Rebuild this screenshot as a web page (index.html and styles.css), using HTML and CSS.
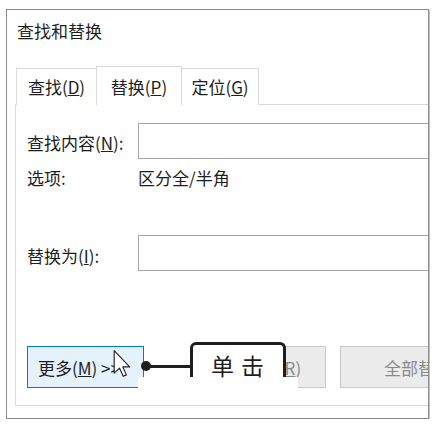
FILE: index.html
```html
<!DOCTYPE html>
<html lang="zh-CN">
<head>
<meta charset="utf-8">
<title>查找和替换</title>
<link rel="stylesheet" href="styles.css">
</head>
<body>
<div class="dialog">
  <div class="title">查找和替换</div>
  <div class="tabs">
    <div class="tab tab-first">查找(<u>D</u>)</div>
    <div class="tab tab-active">替换(<u>P</u>)</div>
    <div class="tab tab-last">定位(<u>G</u>)</div>
  </div>
  <div class="panel">
    <div class="row">
      <div class="label">查找内容(<u>N</u>):</div>
      <div class="input"></div>
    </div>
    <div class="row row-opt">
      <div class="label">选项:</div>
      <div class="opt-value">区分全/半角</div>
    </div>
    <div class="row row-replace">
      <div class="label label-low">替换为(<u>I</u>):</div>
      <div class="input"></div>
    </div>
    <div class="buttons">
      <div class="btn btn-more">更多(<u>M</u>) &gt;&gt;</div>
      <div class="btn btn-off btn-replace">替换(<u>R</u>)</div>
      <div class="btn btn-off btn-all">全部替换(<u>A</u>)</div>
    </div>
  </div>
</div>

<svg class="cursor" width="18" height="27" viewBox="0 0 12 19" aria-hidden="true">
  <path d="M0.5 0.5 L0.5 16.3 L4.3 12.8 L6.9 18.5 L9.1 17.5 L6.6 11.9 L11.4 11.9 Z" fill="#fff" stroke="#222" stroke-width="0.8" stroke-linejoin="round"/>
</svg>

<div class="patch"></div>
<div class="dot"></div>
<div class="leader"></div>
<div class="callout">单击</div>
</body>
</html>
```
FILE: styles.css
```css
html, body {
  margin: 0;
  padding: 0;
  background: #fff;
}

body {
  font-family: "Noto Sans CJK SC", "Noto Sans", sans-serif;
  font-size: 17px;
  color: #1e1e1e;
}

.dialog {
  margin: 9px 0 0 6px;
  width: 423px;
  height: 410px;
  box-sizing: border-box;
  border: 1px solid #8a8a8a;
  box-shadow: 1px 1px 0 #c4c4c4;
  overflow: hidden;
  background: #fff;
}

.title {
  padding: 11px 0 0 10px;
  line-height: 20px;
}

.tabs {
  display: flex;
  align-items: flex-end;
  margin-top: 25px;
  margin-bottom: -1px;
  padding-left: 9px;
}

.tab {
  box-sizing: border-box;
  line-height: 20px;
  padding: 8px 0 8px 0;
  text-align: center;
  border-top: 1px solid #d9d9d9;
  background: #fff;
}

.tab-first {
  width: 80px;
  border-left: 1px solid #d9d9d9;
}

.tab-active {
  position: relative;
  z-index: 1;
  width: 86px;
  padding-top: 10px;
  border-left: 1px solid #d9d9d9;
  border-right: 1px solid #d9d9d9;
}

.tab-last {
  width: 77px;
  border-right: 1px solid #d9d9d9;
}

.panel {
  margin-left: 8px;
  width: 600px;
  height: 302px;
  box-sizing: border-box;
  border: 1px solid #d9d9d9;
  padding: 18px 0 0 11px;
  background: #fff;
}

.row {
  display: flex;
  align-items: center;
}

.label {
  width: 111px;
  flex: none;
  line-height: 20px;
  padding-top: 3px;
}

.label-low {
  padding-top: 5px;
}

.input {
  width: 400px;
  height: 36px;
  box-sizing: border-box;
  border: 1px solid #a6a6a6;
  background: #fff;
}

.row-opt {
  margin-top: 9px;
  line-height: 20px;
}

.row-opt .label {
  padding-top: 0;
}

.row-replace {
  margin-top: 47px;
}

.buttons {
  display: flex;
  margin-top: 75px;
}

.btn {
  height: 42px;
  box-sizing: border-box;
  display: flex;
  align-items: center;
  white-space: nowrap;
  flex: none;
}

.btn-more {
  width: 117px;
  padding-left: 10px;
  background: #e5f1fb;
  border: 1px solid #0078d7;
}

.btn-off {
  background: #ebebeb;
  border: 1px solid #c9c9c9;
  color: #8a8a8a;
}

.btn-replace {
  width: 116px;
  margin-left: 66px;
  justify-content: center;
  padding-left: 10px;
}

.btn-all {
  width: 180px;
  margin-left: 14px;
  padding-left: 43px;
}

.cursor {
  position: absolute;
  left: 113px;
  top: 350px;
}

.patch {
  position: absolute;
  left: 138px;
  top: 377px;
  width: 160px;
  height: 26px;
  background: #fff;
}

.dot {
  position: absolute;
  left: 141px;
  top: 361px;
  width: 10px;
  height: 10px;
  border-radius: 50%;
  background: #1e1e1e;
}

.leader {
  position: absolute;
  left: 146px;
  top: 365px;
  width: 46px;
  height: 3px;
  background: #1e1e1e;
}

.callout {
  position: absolute;
  left: 190px;
  top: 342px;
  width: 96px;
  height: 35px;
  box-sizing: border-box;
  border: 3px solid #1e1e1e;
  border-bottom: none;
  border-radius: 6px 6px 0 0;
  background: #fff;
  padding: 9px 0 0 18px;
  font-size: 23px;
  line-height: 23px;
  letter-spacing: 7px;
  color: #1e1e1e;
  white-space: nowrap;
}
```
